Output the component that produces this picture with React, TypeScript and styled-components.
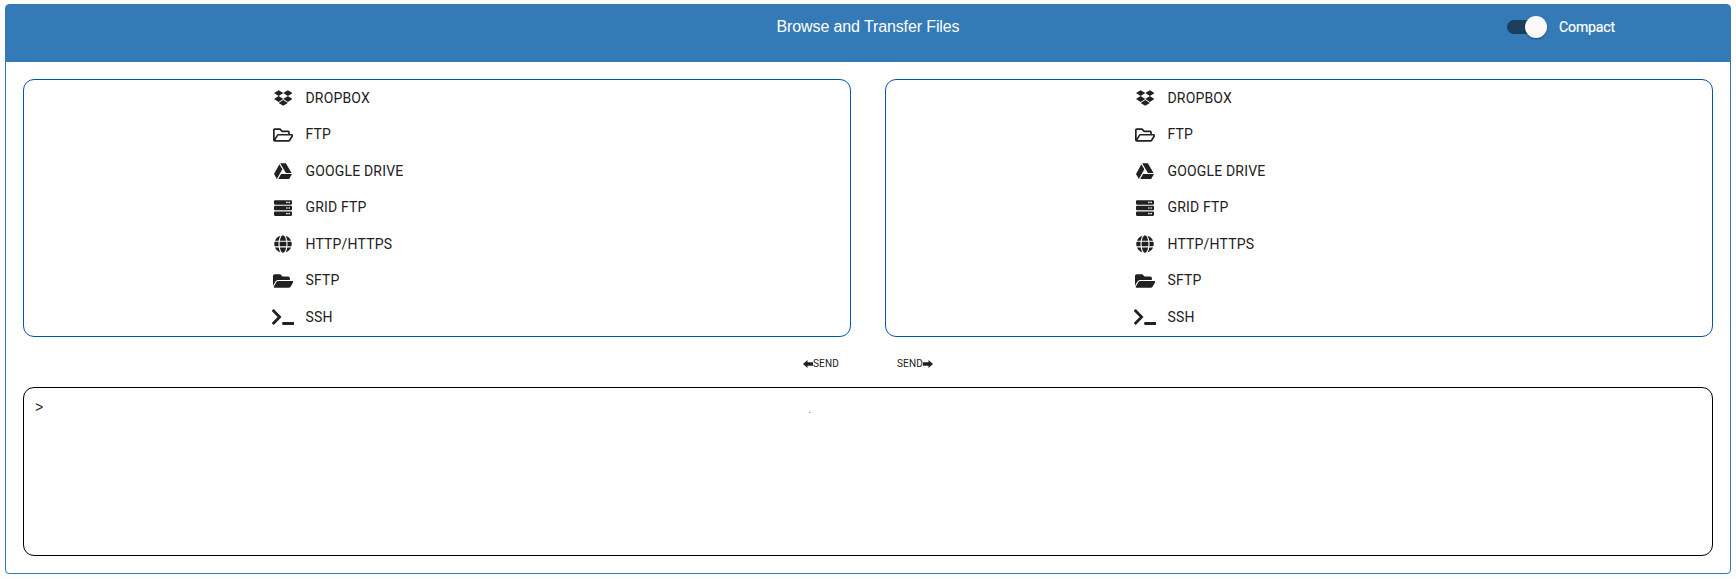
import React from "react";
import styled, { createGlobalStyle } from "styled-components";
import {
  FaDropbox,
  FaRegFolderOpen,
  FaGoogleDrive,
  FaServer,
  FaGlobe,
  FaFolderOpen,
  FaTerminal,
} from "react-icons/fa";

const GlobalStyle = createGlobalStyle`
  *, *::before, *::after { box-sizing: border-box; }
  body { margin: 0; background: #fdfdfd; font-family: Roboto, "Liberation Sans", sans-serif; color: #212121; }
  button { font: inherit; color: inherit; background: none; border: 0; margin: 0; padding: 0; }
`;

const Page = styled.div`
  height: 579px;
  padding: 4px 5px 5px;
`;

const Card = styled.main`
  height: 570px;
  border: 1px solid #337ab7;
  border-radius: 4px;
  background: #fff;
`;

const Header = styled.header`
  display: grid;
  grid-template-columns: 1fr auto 1fr;
  height: 57px;
  padding-top: 11px;
  background: #337ab7;
  border-radius: 2px 2px 0 0;
  color: #fff;
`;

const Title = styled.h1`
  grid-column: 2;
  margin: 1px 0 0;
  font: 400 16px/20px "Liberation Sans", Arial, sans-serif;
  letter-spacing: -0.12px;
`;

const CompactControl = styled.label`
  display: flex;
  justify-self: end;
  height: 22px;
  align-items: center;
  margin-right: 115px;
  font-size: 14px;
  line-height: 20px;
  letter-spacing: -0.12px;
  -webkit-text-stroke: 0.2px #fff;
`;

const Track = styled.span`
  display: flex;
  align-items: center;
  justify-content: flex-end;
  width: 34px;
  height: 14px;
  margin-right: 18px;
  border-radius: 7px;
  background: #1b3f5e;
`;

const Thumb = styled.span`
  flex: none;
  width: 22px;
  height: 22px;
  margin-right: -6px;
  border-radius: 50%;
  background: #fafafa;
  box-shadow: 0 1px 2px rgba(0, 0, 0, 0.35);
`;

const Body = styled.div`
  padding: 17px;
`;

const Browsers = styled.div`
  display: grid;
  grid-template-columns: 1fr 1fr;
  gap: 34px;
`;

const Browser = styled.section`
  height: 258px;
  padding-left: 247px;
  border: 1px solid #0056b3;
  border-radius: 11px;
`;

const Endpoint = styled.button`
  display: flex;
  align-items: center;
  height: 36.5px;
  padding-bottom: 1px;
  font-size: 14px;
  line-height: 24px;
  letter-spacing: 0.17px;
`;

const IconSlot = styled.span<{ $width: number }>`
  display: flex;
  justify-content: center;
  width: 24px;
  margin-right: 10.5px;
  padding-top: 1px;
  svg {
    flex: none;
    width: ${(p) => p.$width}px;
    height: 18px;
  }
`;

const Transfer = styled.div`
  display: flex;
  justify-content: center;
  gap: 58px;
  height: 50px;
  padding-top: 18px;
`;

const SendButton = styled.button`
  display: flex;
  align-items: center;
  height: 17px;
  font-size: 10px;
  line-height: 17px;
  letter-spacing: 0.17px;
`;

const Arrow = styled.svg<{ $flip?: boolean }>`
  width: 10px;
  height: 8px;
  margin-top: 1px;
  fill: #212121;
  transform: ${(p) => (p.$flip ? "scaleX(-1)" : "none")};
`;

const Console = styled.section`
  display: grid;
  grid-template-columns: 773.5px 1fr;
  height: 169px;
  padding: 10px 11px;
  border: 1px solid #000;
  border-radius: 11px;
  font: 14px/20px "Liberation Mono", monospace;
`;

const Cursor = styled.span`
  font: 8px/25px "Liberation Sans", sans-serif;
  color: #000;
`;

const endpoints = [
  { name: "DROPBOX", Icon: FaDropbox, width: 18.5 },
  { name: "FTP", Icon: FaRegFolderOpen, width: 20.25 },
  { name: "GOOGLE DRIVE", Icon: FaGoogleDrive, width: 18 },
  { name: "GRID FTP", Icon: FaServer, width: 18 },
  { name: "HTTP/HTTPS", Icon: FaGlobe, width: 18 },
  { name: "SFTP", Icon: FaFolderOpen, width: 20.25 },
  { name: "SSH", Icon: FaTerminal, width: 22.5 },
];

function EndpointBrowser() {
  return (
    <Browser>
      {endpoints.map(({ name, Icon, width }) => (
        <Endpoint key={name}>
          <IconSlot $width={width}><Icon /></IconSlot>
          {name}
        </Endpoint>
      ))}
    </Browser>
  );
}

function SendArrow({ flip }: { flip?: boolean }) {
  return (
    <Arrow $flip={flip} viewBox="0 0 10 8">
      <path d="M0 4 4.5 0V2.2H10V5.8H4.5V8Z" />
    </Arrow>
  );
}

export default function App() {
  return (
    <Page>
      <GlobalStyle />
      <Card>
        <Header>
          <Title>Browse and Transfer Files</Title>
          <CompactControl>
            <Track><Thumb /></Track>
            Compact
          </CompactControl>
        </Header>
        <Body>
          <Browsers>
            <EndpointBrowser />
            <EndpointBrowser />
          </Browsers>
          <Transfer>
            <SendButton><SendArrow />SEND</SendButton>
            <SendButton>SEND<SendArrow flip /></SendButton>
          </Transfer>
          <Console>
            <span>&gt;</span>
            <Cursor>.</Cursor>
          </Console>
        </Body>
      </Card>
    </Page>
  );
}
